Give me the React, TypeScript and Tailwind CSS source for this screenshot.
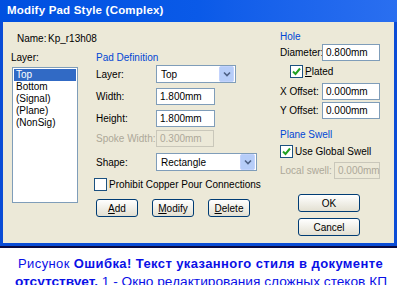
import React from "react";

const FONT = { fontFamily: '"Liberation Sans", Arial, sans-serif' };

function TextBox({ value, w, disabled }: { value: string; w: string; disabled?: boolean }) {
  return (
    <div
      className={`${w} h-[17px] flex items-center px-[3px] border text-[10px] ${
        disabled ? "border-[#c9c7ba] bg-[#ece9d8] text-[#aca899]" : "border-[#7f9db9] bg-white text-black"
      }`}
    >
      {value}
    </div>
  );
}

function Select({ value, w }: { value: string; w: string }) {
  return (
    <div className={`${w} h-[18px] flex items-center border border-[#7f9db9] bg-white`}>
      <span className="flex-1 pl-[4px] text-[10px]">{value}</span>
      <span className="w-[15px] h-[16px] mr-[1px] flex items-center justify-center rounded-[2px] bg-[#b6cdf8] border border-[#c3d3fd]">
        <svg width="8" height="6" viewBox="0 0 8 6">
          <path d="M1 1.5 L4 4.5 L7 1.5" stroke="#4d6185" strokeWidth="1.6" fill="none" />
        </svg>
      </span>
    </div>
  );
}

function Check({ checked }: { checked?: boolean }) {
  return (
    <span className="w-[13px] h-[13px] flex items-center justify-center border border-[#1c5180] bg-white">
      {checked && (
        <svg width="9" height="9" viewBox="0 0 9 9">
          <path d="M1 4.5 L3.5 7 L8 1.5" stroke="#21a121" strokeWidth="2" fill="none" />
        </svg>
      )}
    </span>
  );
}

function Button({ children, w }: { children: React.ReactNode; w: string }) {
  return (
    <div
      className={`${w} h-[18px] flex items-center justify-center rounded-[3px] border border-[#003c74] bg-gradient-to-b from-white to-[#e3e0d2] text-[10px] text-black`}
    >
      {children}
    </div>
  );
}

function Row({
  label,
  children,
  className = "",
  disabled,
}: {
  label: string;
  children: React.ReactNode;
  className?: string;
  disabled?: boolean;
}) {
  return (
    <div className={`flex items-center ${className}`}>
      <span className={`w-[60px] text-[10px] ${disabled ? "text-[#aca899]" : ""}`}>{label}</span>
      {children}
    </div>
  );
}

export default function App() {
  return (
    <div className="w-[397px] h-[285px] overflow-hidden bg-white" style={FONT}>
      {/* dialog window */}
      <div className="h-[248px] flex flex-col border-b-2 border-[#0a0a40]">
        <div className="h-[22px] flex items-center pl-[7px] bg-gradient-to-r from-[#0050e0] via-[#0a5ae8] to-[#2a6ff0]">
          <span className="text-white font-bold text-[11.5px] tracking-[0.2px]">Modify Pad Style (Complex)</span>
        </div>
        <div className="flex-1 flex border-x-[3px] border-b-[3px] border-[#0a4cd6] bg-[#ece9d8] text-black">
          {/* left + middle */}
          <div className="w-[274px] flex flex-col pl-[8px] pt-[10px]">
            <div className="flex text-[10px] pl-[6px] h-[12px] items-center">
              <span className="w-[31px]">Name:</span>
              <span>Kp_r13h08</span>
            </div>
            <div className="flex mt-[8px]">
              <div className="w-[82px] flex flex-col">
                <span className="text-[10px] h-[12px] leading-[12px]">Layer:</span>
                <div className="mt-[3px] ml-[1px] w-[66px] h-[136px] border border-[#7f9db9] bg-white text-[10px] leading-[12px] pt-[1px] px-[1px]">
                  <div className="bg-[#316ac5] text-white pl-[2px]">Top</div>
                  <div className="pl-[2px]">Bottom</div>
                  <div className="pl-[2px]">(Signal)</div>
                  <div className="pl-[2px]">(Plane)</div>
                  <div className="pl-[2px]">(NonSig)</div>
                </div>
              </div>
              <div className="flex-1 flex flex-col pl-[3px]">
                <span className="text-[10px] h-[12px] leading-[12px] text-[#0046d5]">Pad Definition</span>
                <Row label="Layer:" className="mt-[1px]">
                  <Select value="Top" w="w-[80px]" />
                </Row>
                <Row label="Width:" className="mt-[5px]">
                  <TextBox value="1.800mm" w="w-[59px]" />
                </Row>
                <Row label="Height:" className="mt-[5px]">
                  <TextBox value="1.800mm" w="w-[59px]" />
                </Row>
                <Row label="Spoke Width:" className="mt-[3px]" disabled>
                  <TextBox value="0.300mm" w="w-[58px]" disabled />
                </Row>
                <div className="mt-[6px] flex items-center">
                  <span className="w-[60px] text-[10px]">Shape:</span>
                  <Select value="Rectangle" w="w-[101px]" />
                </div>
                <div className="mt-[6px] flex items-center gap-[2px] -ml-[2px]">
                  <Check />
                  <span className="text-[10px]">Prohibit Copper Pour Connections</span>
                </div>
                <div className="mt-[7px] flex gap-[14px]">
                  <Button w="w-[42px]"><span className="underline">A</span>dd</Button>
                  <Button w="w-[42px]"><span className="underline">M</span>odify</Button>
                  <Button w="w-[42px]"><span className="underline">D</span>elete</Button>
                </div>
              </div>
            </div>
          </div>
          {/* right */}
          <div className="flex-1 flex flex-col pl-[3px] pt-[9px]">
            <span className="text-[10px] h-[12px] leading-[12px] text-[#0046d5]">Hole</span>
            <div className="mt-[1px] flex items-center">
              <span className="w-[42px] text-[10px]">Diameter:</span>
              <TextBox value="0.800mm" w="w-[58px]" />
            </div>
            <div className="mt-[3px] ml-[10px] flex items-center gap-[2px]">
              <Check checked />
              <span className="text-[10px]"><span className="underline">P</span>lated</span>
            </div>
            <div className="mt-[4px] flex items-center">
              <span className="w-[42px] text-[10px]">X Offset:</span>
              <TextBox value="0.000mm" w="w-[58px]" />
            </div>
            <div className="mt-[2px] flex items-center">
              <span className="w-[42px] text-[10px]">Y Offset:</span>
              <TextBox value="0.000mm" w="w-[58px]" />
            </div>
            <span className="mt-[10px] text-[10px] h-[12px] leading-[12px] text-[#0046d5]">Plane Swell</span>
            <div className="mt-[3px] flex items-center gap-[2px]">
              <Check checked />
              <span className="text-[10px]">Use Global Swell</span>
            </div>
            <div className="mt-[3px] flex items-center">
              <span className="w-[54px] text-[10px] text-[#aca899]">Local swell:</span>
              <TextBox value="0.000mm" w="w-[46px]" disabled />
            </div>
            <div className="mt-[15px] ml-[18px] flex flex-col gap-[6px]">
              <Button w="w-[62px]">OK</Button>
              <Button w="w-[62px]">Cancel</Button>
            </div>
          </div>
        </div>
      </div>
      {/* caption */}
      <div className="pt-[9px] text-[#0a10e6] leading-none">
        <div className="pl-[18px] text-[13px] tracking-[0.4px] whitespace-nowrap">
          Рисунок <span className="font-bold">Ошибка! Текст указанного стиля в документе</span>
        </div>
        <div className="pl-[15px] mt-[5px] text-[13.7px] whitespace-nowrap">
          <span className="font-bold">отсутствует.</span> 1 - Окно редактирования сложных стеков КП
        </div>
      </div>
    </div>
  );
}
